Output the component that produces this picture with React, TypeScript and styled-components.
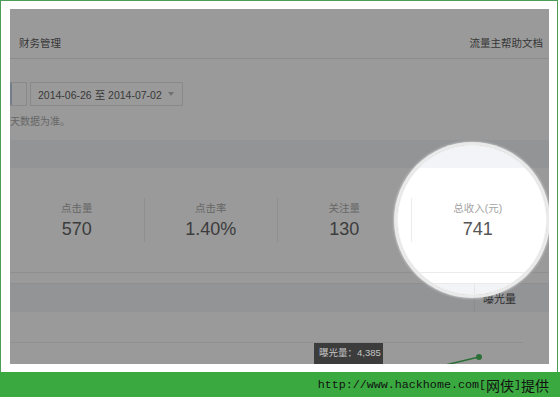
import styled, { createGlobalStyle } from "styled-components";

const GlobalStyle = createGlobalStyle`
  html, body {
    margin: 0;
    padding: 0;
    background: #fff;
  }
  body {
    font-family: "Liberation Sans", "Noto Sans CJK SC", sans-serif;
  }
`;

const stats = [
  { label: "点击量", value: "570" },
  { label: "点击率", value: "1.40%" },
  { label: "关注量", value: "130" },
  { label: "总收入(元)", value: "741" },
];

export default function App() {
  return (
    <>
      <GlobalStyle />
      <Page>
        <Frame>
          <Screen>
            <Header>
              <NavItem>财务管理</NavItem>
              <NavItem>流量主帮助文档</NavItem>
            </Header>
            <DateRow>
              <RangeTab />
              <DatePicker>
                <span>2014-06-26 至 2014-07-02</span>
                <Caret />
              </DatePicker>
            </DateRow>
            <Notice>天数据为准。</Notice>
            <Band />
            <Stats>
              {stats.map((s, i) => (
                <StatItem key={s.label} $first={i === 0}>
                  <StatLabel>{s.label}</StatLabel>
                  <StatValue>{s.value}</StatValue>
                </StatItem>
              ))}
            </Stats>
            <TableHead>
              <HeadCell>曝光量</HeadCell>
            </TableHead>
            <Chart>
              <svg width="539" height="52" viewBox="0 0 539 52">
                <line x1="0" y1="30.5" x2="513" y2="30.5" stroke="#ededed" strokeWidth="1" />
                <polyline
                  points="380,66 469,45"
                  fill="none"
                  stroke="#38b34c"
                  strokeWidth="1.5"
                />
                <circle cx="469" cy="45" r="3" fill="#38b34c" />
              </svg>
              <Tooltip>曝光量：4,385</Tooltip>
            </Chart>
            <Spotlight />
          </Screen>
        </Frame>
        <Footer>
          <Mono>http://www.hackhome.com[</Mono>
          <Cjk>网侠</Cjk>
          <Mono>]</Mono>
          <Cjk>提供</Cjk>
        </Footer>
      </Page>
    </>
  );
}

const Page = styled.div`
  width: 560px;
  height: 397px;
  display: flex;
  flex-direction: column;
  overflow: hidden;
`;

const Frame = styled.div`
  width: 558px;
  height: 372px;
  box-sizing: border-box;
  border: 1px solid #4d9d58;
  border-bottom: none;
  padding: 8px 9px 8px 9px;
  background: #fff;
`;

const Screen = styled.div`
  position: relative;
  width: 539px;
  height: 355px;
  overflow: hidden;
  background: #fff;
  display: flex;
  flex-direction: column;
`;

const Header = styled.div`
  height: 50px;
  flex: none;
  box-sizing: border-box;
  padding: 18px 6px 0 9px;
  border-bottom: 1px solid #e6e6e6;
  display: flex;
  align-items: center;
  justify-content: space-between;
`;

const NavItem = styled.span`
  font-size: 10.5px;
  line-height: 16px;
  color: #4a4a4a;
`;

const DateRow = styled.div`
  margin-top: 23px;
  height: 24px;
  flex: none;
  display: flex;
  gap: 3px;
`;

const RangeTab = styled.div`
  width: 17px;
  box-sizing: border-box;
  border: 1px solid #e0e0e0;
  border-left: none;
  box-shadow: inset 2px 0 #b8cbe4;
`;

const DatePicker = styled.div`
  width: 153px;
  box-sizing: border-box;
  border: 1px solid #e0e0e0;
  padding: 0 8px 0 7px;
  display: flex;
  align-items: center;
  justify-content: space-between;
  font-size: 10.5px;
  color: #505050;
`;

const Caret = styled.i`
  width: 0;
  height: 0;
  border-left: 3.5px solid transparent;
  border-right: 3.5px solid transparent;
  border-top: 4px solid #b5b5b5;
`;

const Notice = styled.div`
  margin-top: 8px;
  font-size: 10px;
  line-height: 16px;
  color: #a3a3a3;
  flex: none;
`;

const Band = styled.div`
  margin-top: 10px;
  height: 28px;
  flex: none;
  background: #f3f4f7;
`;

const Stats = styled.div`
  height: 104px;
  flex: none;
  border-bottom: 1px solid #ebebeb;
  display: grid;
  grid-template-columns: repeat(4, 133.5px);
  align-items: center;
`;

const StatItem = styled.div<{ $first: boolean }>`
  height: 44px;
  border-left: ${(p) => (p.$first ? "none" : "1px solid #ececec")};
  display: flex;
  flex-direction: column;
  align-items: center;
  justify-content: center;
  gap: 3px;
`;

const StatLabel = styled.span`
  font-size: 10.5px;
  line-height: 14px;
  color: #a3a3a3;
`;

const StatValue = styled.span`
  font-size: 18px;
  line-height: 22px;
  color: #555;
`;

const TableHead = styled.div`
  margin-top: 10px;
  height: 29px;
  flex: none;
  box-sizing: border-box;
  background: #f3f4f7;
  border-top: 1px solid #ebebeb;
  display: flex;
  justify-content: flex-end;
`;

const HeadCell = styled.div`
  width: 75px;
  box-sizing: border-box;
  border-left: 1px solid #e6e6e6;
  padding-left: 8px;
  display: flex;
  align-items: center;
  font-size: 11px;
  color: #3a3a3a;
`;

const Chart = styled.div`
  position: relative;
  flex: 1;
  svg {
    display: block;
  }
`;

const Tooltip = styled.div`
  position: absolute;
  left: 304px;
  top: 31px;
  z-index: 2;
  width: 69px;
  height: 24px;
  box-sizing: border-box;
  padding: 3px 0 0 5px;
  background: #3c3c3c;
  color: #c4c4c4;
  font-size: 9.5px;
  line-height: 14px;
  white-space: nowrap;
`;

const Spotlight = styled.div`
  position: absolute;
  left: 387px;
  top: 136px;
  width: 150px;
  height: 150px;
  border-radius: 50%;
  pointer-events: none;
  z-index: 1;
  box-shadow: inset 0 0 0 1px #f0f0f0, 0 0 0 3px rgba(236, 236, 236, 0.95),
    0 0 2px 4px rgba(220, 220, 220, 0.5), 0 0 0 2000px rgba(30, 30, 30, 0.45);
`;

const Footer = styled.div`
  height: 25px;
  flex: none;
  background: #3aaa40;
  display: flex;
  justify-content: flex-end;
  align-items: center;
  padding: 0 11px 2px 0;
  color: #111;
`;

const Mono = styled.span`
  font-family: "Liberation Mono", monospace;
  font-size: 11.7px;
`;

const Cjk = styled.span`
  font-family: "Noto Sans CJK SC", sans-serif;
  font-size: 14px;
  line-height: 18px;
`;
